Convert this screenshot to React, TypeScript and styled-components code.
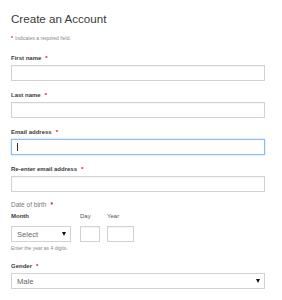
import styled, { createGlobalStyle } from 'styled-components'

const GlobalStyle = createGlobalStyle`
  * {
    margin: 0;
    padding: 0;
    box-sizing: border-box;
  }
  body {
    background: #fff;
    font-family: "Liberation Sans", Arial, sans-serif;
    color: #333;
  }
`

const Page = styled.form`
  width: 282px;
  height: 300px;
  padding: 12px 17px 0 11px;
  display: flex;
  flex-direction: column;
  overflow: hidden;
`

const Title = styled.h1`
  font-size: 11.6px;
  line-height: 14px;
  font-weight: 400;
  color: #3a3a3a;
`

const Note = styled.p`
  margin-top: 9px;
  font-size: 5px;
  line-height: 6px;
  color: #8a8a8a;
`

const Star = styled.span<{ $gap?: number }>`
  color: #c8102e;
  font-weight: 700;
  margin-left: ${({ $gap }) => $gap ?? 4}px;
  margin-right: ${({ $gap }) => ($gap === 0 ? 2 : 0)}px;
`

const Fields = styled.div`
  margin-top: 13px;
  display: flex;
  flex-direction: column;
  gap: 10px;
`

const Field = styled.div`
  display: flex;
  flex-direction: column;
  gap: 3px;
`

const Label = styled.label`
  font-size: 6px;
  line-height: 8px;
  font-weight: 700;
  color: #3a3a3a;
`

const TextBox = styled.div<{ $focused?: boolean; $width?: number }>`
  width: ${({ $width }) => ($width ? `${$width}px` : '100%')};
  height: 16px;
  display: flex;
  align-items: center;
  padding-left: 5px;
  background: #fff;
  border: 1px solid ${({ $focused }) => ($focused ? '#8fbde9' : '#d2d2d2')};
  box-shadow: ${({ $focused }) =>
    $focused ? '0 0 2px rgba(120, 175, 230, 0.6)' : 'inset 0 1px 1px rgba(0, 0, 0, 0.04)'};
`

const Caret = styled.span`
  width: 1px;
  height: 8px;
  background: #333;
`

const Birth = styled.div`
  margin-top: 9px;
  display: flex;
  flex-direction: column;
`

const SubLabel = styled.div`
  font-size: 6.5px;
  line-height: 8px;
  color: #7a7a7a;
`

const DateRow = styled.div`
  margin-top: 3px;
  display: flex;
`

const DateCol = styled.div<{ $gap: number }>`
  display: flex;
  flex-direction: column;
  gap: 6px;
  margin-left: ${({ $gap }) => $gap}px;
`

const ColLabel = styled.span<{ $strong?: boolean }>`
  font-size: 6px;
  line-height: 8px;
  font-weight: ${({ $strong }) => ($strong ? 700 : 400)};
  color: ${({ $strong }) => ($strong ? '#3a3a3a' : '#555')};
`

const Select = styled.div<{ $width?: number }>`
  width: ${({ $width }) => ($width ? `${$width}px` : '100%')};
  height: 16px;
  display: flex;
  align-items: center;
  justify-content: space-between;
  padding: 0 4px 0 5px;
  background: #fff;
  border: 1px solid #d2d2d2;
  font-size: 7.6px;
  color: #666;
`

const Arrow = styled.span`
  width: 0;
  height: 0;
  border-left: 2.5px solid transparent;
  border-right: 2.5px solid transparent;
  border-top: 4px solid #111;
`

const Hint = styled.p`
  margin-top: 3px;
  font-size: 5px;
  line-height: 6px;
  color: #8a8a8a;
`

const Gender = styled(Field)`
  margin-top: 11px;
`

const fields = [
  { label: 'First name' },
  { label: 'Last name' },
  { label: 'Email address', focused: true },
  { label: 'Re-enter email address' },
]

export default function App() {
  return (
    <>
      <GlobalStyle />
      <Page>
        <Title>Create an Account</Title>
        <Note>
          <Star $gap={0}>*</Star>Indicates a required field.
        </Note>
        <Fields>
          {fields.map((f) => (
            <Field key={f.label}>
              <Label>
                {f.label}
                <Star>*</Star>
              </Label>
              <TextBox $focused={f.focused}>{f.focused && <Caret />}</TextBox>
            </Field>
          ))}
        </Fields>
        <Birth>
          <SubLabel>
            Date of birth<Star>*</Star>
          </SubLabel>
          <DateRow>
            <DateCol $gap={0}>
              <ColLabel $strong>Month</ColLabel>
              <Select $width={60}>
                Select
                <Arrow />
              </Select>
            </DateCol>
            <DateCol $gap={9}>
              <ColLabel>Day</ColLabel>
              <TextBox $width={20} />
            </DateCol>
            <DateCol $gap={7}>
              <ColLabel>Year</ColLabel>
              <TextBox $width={27} />
            </DateCol>
          </DateRow>
          <Hint>Enter the year as 4 digits.</Hint>
        </Birth>
        <Gender>
          <Label>
            Gender<Star>*</Star>
          </Label>
          <Select>
            Male
            <Arrow />
          </Select>
        </Gender>
      </Page>
    </>
  )
}
